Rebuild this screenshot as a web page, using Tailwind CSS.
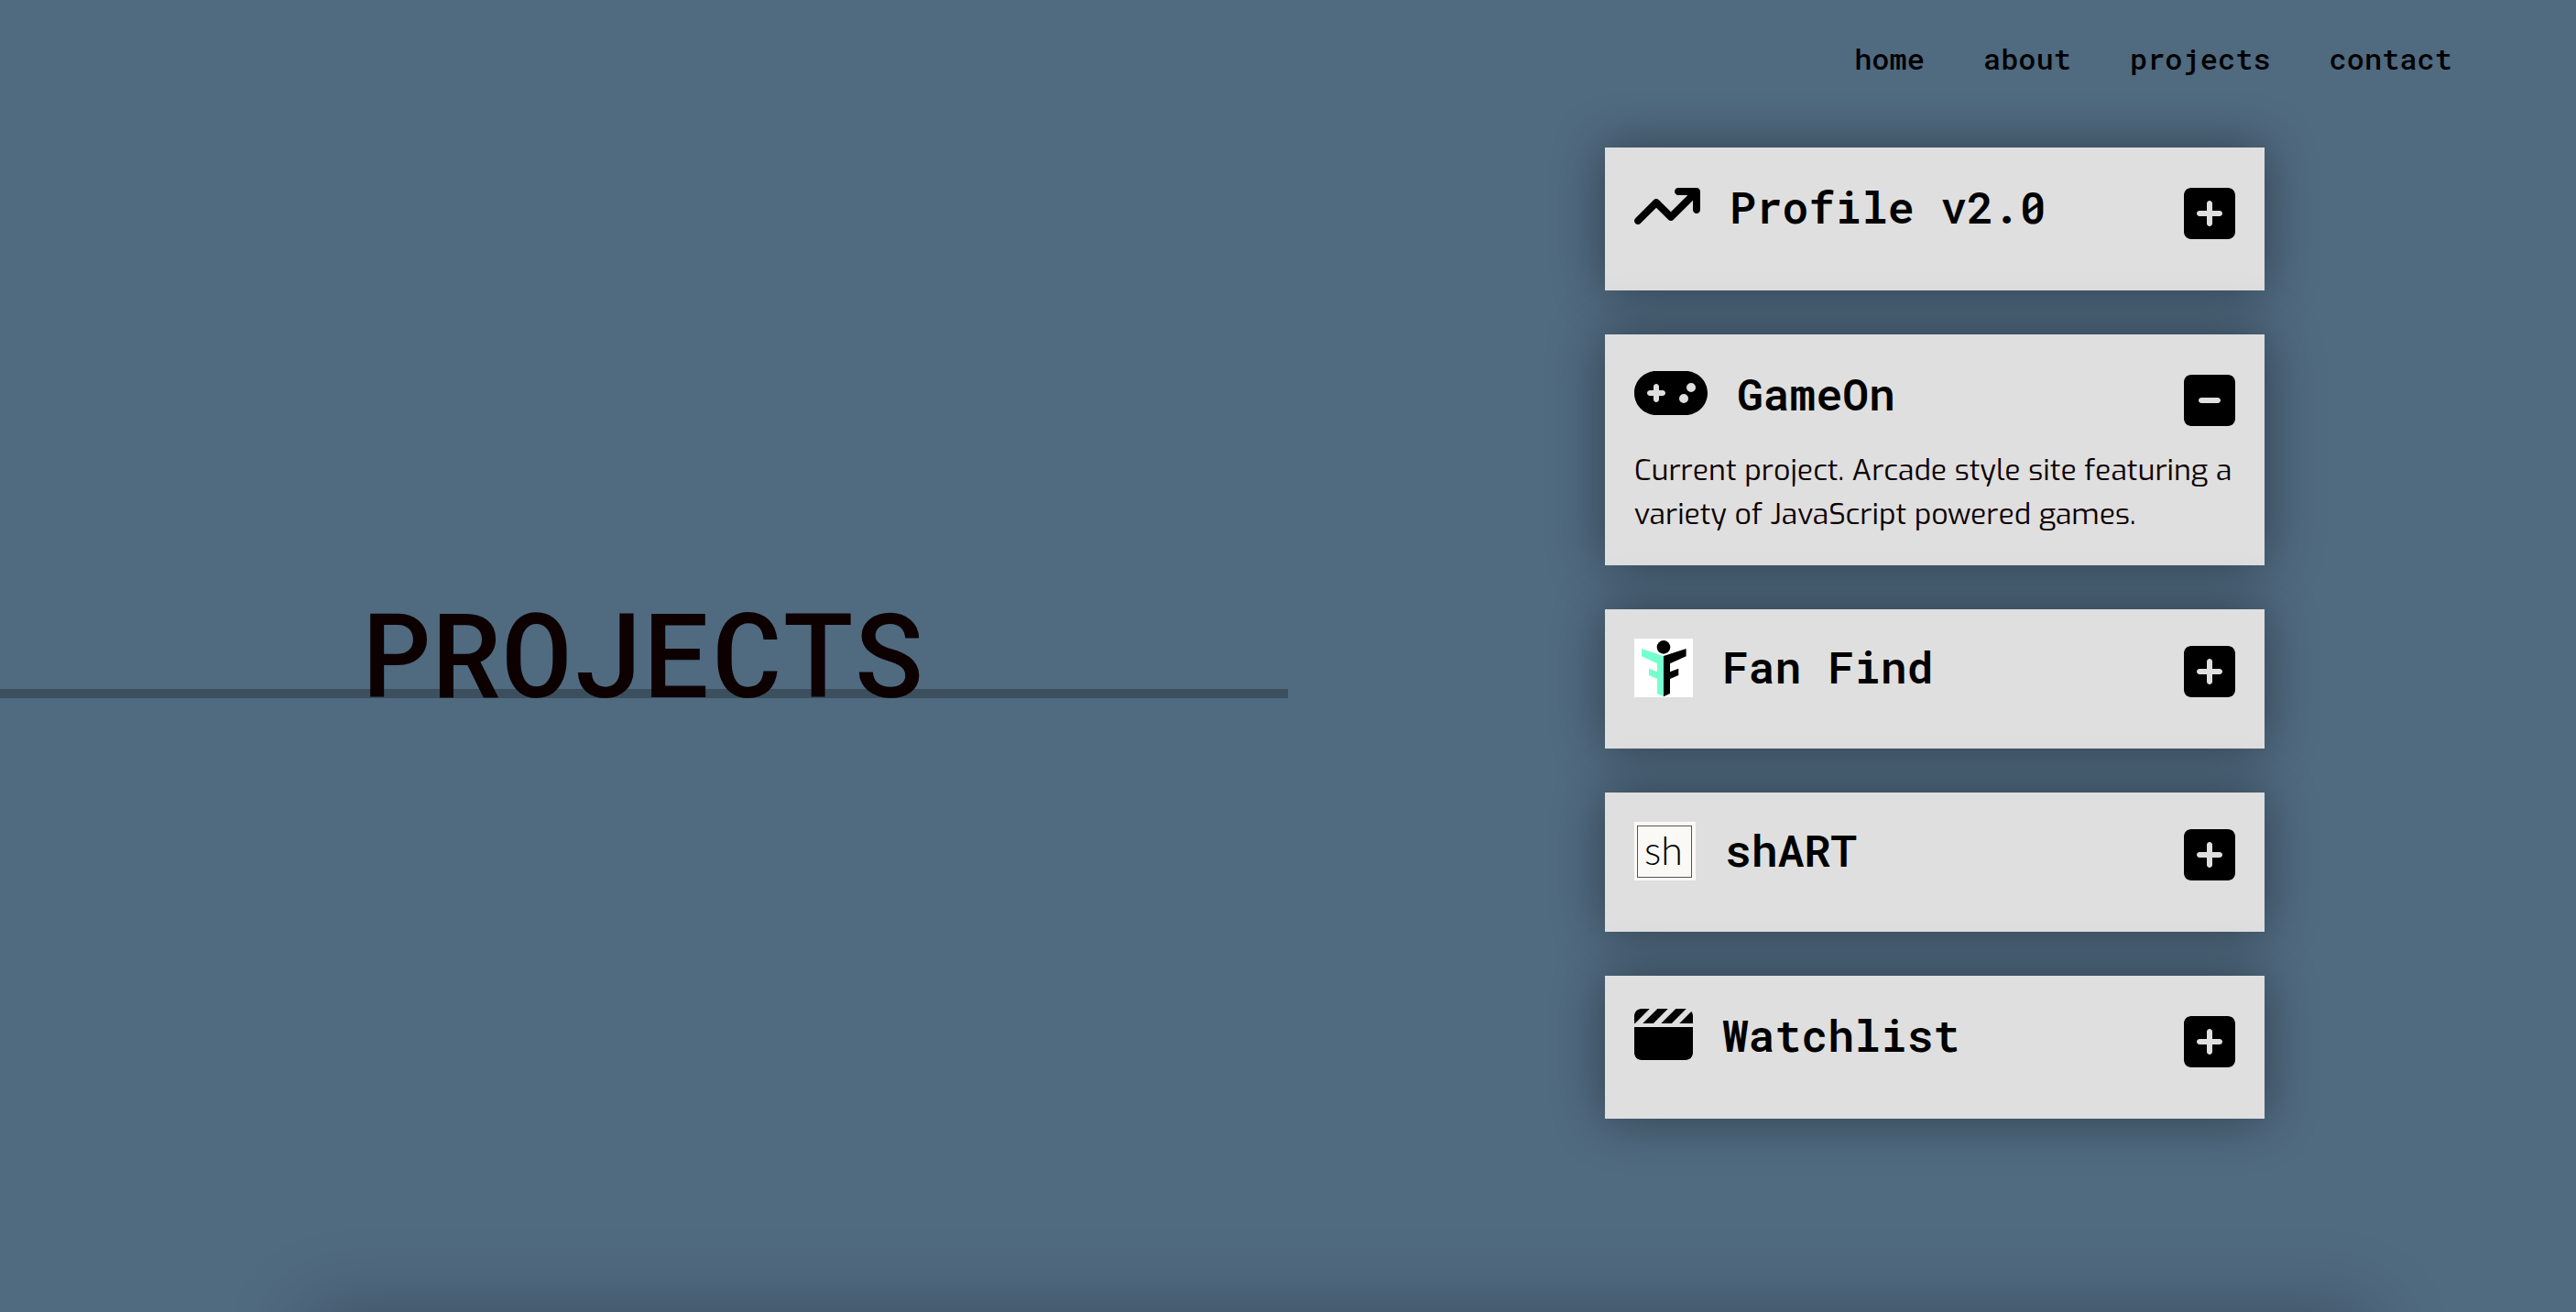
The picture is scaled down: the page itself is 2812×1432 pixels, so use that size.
<!DOCTYPE html>
<html lang="en">
<head>
<meta charset="utf-8">
<meta name="viewport" content="width=device-width, initial-scale=1">
<title>Projects</title>
<script src="https://cdn.jsdelivr.net/npm/@tailwindcss/browser@4"></script>
</head>
<body class="bg-[#506a80] text-black">
<svg class="hidden" aria-hidden="true">
  <symbol id="plus" viewBox="0 32 448 448"><path d="M64 32C28.7 32 0 60.7 0 96L0 416c0 35.3 28.7 64 64 64l320 0c35.3 0 64-28.7 64-64l0-320c0-35.3-28.7-64-64-64L64 32zM200 344l0-64-64 0c-13.3 0-24-10.7-24-24s10.7-24 24-24l64 0 0-64c0-13.3 10.7-24 24-24s24 10.7 24 24l0 64 64 0c13.3 0 24 10.7 24 24s-10.7 24-24 24l-64 0 0 64c0 13.3-10.7 24-24 24s-24-10.7-24-24z"/></symbol>
  <symbol id="minus" viewBox="0 32 448 448"><path d="M64 32C28.7 32 0 60.7 0 96L0 416c0 35.3 28.7 64 64 64l320 0c35.3 0 64-28.7 64-64l0-320c0-35.3-28.7-64-64-64L64 32zM152 232l144 0c13.3 0 24 10.7 24 24s-10.7 24-24 24l-144 0c-13.3 0-24-10.7-24-24s10.7-24 24-24z"/></symbol>
</svg>
<div class="relative grid h-screen grid-cols-2 overflow-hidden font-['Roboto_Mono','DejaVu_Sans_Mono',monospace]">
  <section class="flex flex-col justify-center">
    <div class="relative pb-2">
      <div class="absolute inset-x-0 bottom-[22px] h-[10px] bg-[#3c4f5e]"></div>
      <h1 class="relative pr-1 text-center text-[128px] leading-[128px] font-medium text-[#0d0000]">PROJECTS</h1>
    </div>
  </section>
  <section>
    <nav class="flex h-[129px] items-center justify-end gap-16 pr-[135px] pb-[2px] text-[32px] font-medium">
      <a href="#home">home</a>
      <a href="#about">about</a>
      <a href="#projects">projects</a>
      <a href="#contact">contact</a>
    </nav>
    <div class="pt-8 pl-[6px]">
      <div class="mx-auto flex w-[720px] flex-col gap-12">
        <article class="bg-[#dfdfdf] p-8 shadow-[0_0_56px_rgba(0,0,0,0.4)]">
          <div class="mb-6 flex h-[68px]">
            <svg class="mr-8 h-16 w-[72px]" viewBox="0 0 576 512" aria-hidden="true"><path d="M384 160c-17.7 0-32-14.3-32-32s14.3-32 32-32l160 0c17.7 0 32 14.3 32 32l0 160c0 17.7-14.3 32-32 32s-32-14.3-32-32l0-82.7L342.6 374.6c-12.5 12.5-32.8 12.5-45.3 0L192 269.3 54.6 406.6c-12.5 12.5-32.8 12.5-45.3 0s-12.5-32.8 0-45.3l160-160c12.5-12.5 32.8-12.5 45.3 0L320 306.7 466.7 160 384 160z"/></svg>
            <h2 class="text-[48px] leading-[66px] font-semibold">Profile v2.0</h2>
            <button type="button" aria-label="Expand Profile v2.0" class="ml-auto size-14 self-end"><svg class="size-14"><use href="#plus"/></svg></button>
          </div>
        </article>
        <article class="bg-[#dfdfdf] p-8 shadow-[0_0_56px_rgba(0,0,0,0.4)]">
          <div class="mb-6 flex h-[68px]">
            <svg class="mr-8 h-16 w-20" viewBox="0 0 640 512" aria-hidden="true"><path d="M192 64C86 64 0 150 0 256S86 448 192 448l256 0c106 0 192-86 192-192s-86-192-192-192L192 64zM496 168a40 40 0 1 1 0 80 40 40 0 1 1 0-80zM392 304a40 40 0 1 1 80 0 40 40 0 1 1 -80 0zM168 200c0-13.3 10.7-24 24-24s24 10.7 24 24l0 32 32 0c13.3 0 24 10.7 24 24s-10.7 24-24 24l-32 0 0 32c0 13.3-10.7 24-24 24s-24-10.7-24-24l0-32-32 0c-13.3 0-24-10.7-24-24s10.7-24 24-24l32 0 0-32z"/></svg>
            <h2 class="text-[48px] leading-[66px] font-semibold">GameOn</h2>
            <button type="button" aria-label="Collapse GameOn" class="ml-auto size-14 self-end"><svg class="size-14"><use href="#minus"/></svg></button>
          </div>
          <p class="font-[Exo,'Exo_2',Roboto,sans-serif] text-[32px] leading-[48px] text-[#0d0000]">Current project. Arcade style site featuring a variety of JavaScript powered games.</p>
        </article>
        <article class="bg-[#dfdfdf] p-8 shadow-[0_0_56px_rgba(0,0,0,0.4)]">
          <div class="mb-6 flex h-16">
            <svg class="mr-8 size-16 bg-white" viewBox="0 0 64 64" aria-hidden="true"><circle cx="32" cy="9.4" r="7.3"/><path fill="#76ffce" d="M8 11L32 19V63.3L25 60V44L16 40V32.7L25 36.3V27.3L8 19.3Z"/><path d="M56.6 11L32 19V63.3L39 60V44L48.3 40V32.7L39 36.3V27.3L56.6 19.3Z"/></svg>
            <h2 class="text-[48px] leading-[62px] font-semibold">Fan Find</h2>
            <button type="button" aria-label="Expand Fan Find" class="ml-auto size-14 self-end"><svg class="size-14"><use href="#plus"/></svg></button>
          </div>
        </article>
        <article class="bg-[#dfdfdf] p-8 shadow-[0_0_56px_rgba(0,0,0,0.4)]">
          <div class="mb-6 flex h-16">
            <svg class="mr-8 h-16 w-[67px] bg-[#faf9f5]" viewBox="0 0 67 64" role="img" aria-label="shART logo"><rect x="3.5" y="4.5" width="59" height="56" fill="none" stroke="#555"/><text x="32" y="47" text-anchor="middle" class="font-[Lato,sans-serif] text-[43px] font-light [-webkit-text-stroke:1px_black]" fill="#000">sh</text></svg>
            <h2 class="text-[48px] leading-[62px] font-semibold">shART</h2>
            <button type="button" aria-label="Expand shART" class="ml-auto size-14 self-end"><svg class="size-14"><use href="#plus"/></svg></button>
          </div>
        </article>
        <article class="bg-[#dfdfdf] p-8 shadow-[0_0_56px_rgba(0,0,0,0.4)]">
          <div class="mb-6 flex h-[68px]">
            <svg class="mr-8 size-16" viewBox="0 0 512 512" aria-hidden="true"><path d="M448 32l-86.1 0-1 1-127 127 92.1 0 1-1L453.8 32.3c-1.9-.2-3.8-.3-5.8-.3zm64 128l0-64c0-15.1-5.3-29.1-14-40l-104 104L512 160zM294.1 32l-92.1 0-1 1L73.9 160l92.1 0 1-1 127-127zM64 32C28.7 32 0 60.7 0 96l0 64 6.1 0 1-1 127-127L64 32zM512 192L0 192 0 416c0 35.3 28.7 64 64 64l384 0c35.3 0 64-28.7 64-64l0-224z"/></svg>
            <h2 class="text-[48px] leading-[66px] font-semibold">Watchlist</h2>
            <button type="button" aria-label="Expand Watchlist" class="ml-auto size-14 self-end"><svg class="size-14"><use href="#plus"/></svg></button>
          </div>
        </article>
      </div>
    </div>
  </section>
  <!-- top edge of the contact panel, whose shadow reaches above the fold -->
  <div class="absolute top-full right-[8%] left-[12%] h-96 shadow-[0_0_80px_rgba(0,0,0,0.25)]"></div>
</div>
</body>
</html>
